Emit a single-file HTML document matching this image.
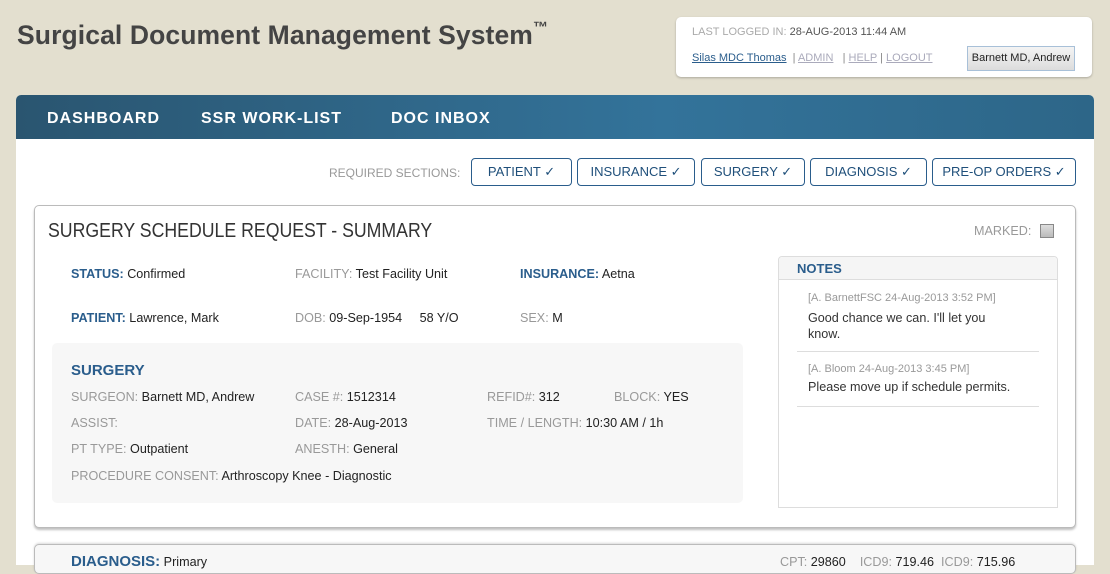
<!DOCTYPE html>
<html><head><meta charset="utf-8"><style>
*{margin:0;padding:0;box-sizing:border-box}
body{width:1110px;height:560px;overflow:hidden;background:#e3dfcf;font-family:"Liberation Sans",sans-serif;font-size:12.6px;color:#222;position:relative}
.a{position:absolute;white-space:nowrap}
.g{color:#999}
.b{color:#2a5d8c;font-weight:bold}
.btn{position:absolute;top:158px;height:28px;border:1px solid #2a5d8c;border-radius:4px;color:#1f4f7a;font-size:13px;line-height:26px;text-align:center;background:#fff}
.nav{position:absolute;top:110px;color:#fff;font-weight:bold;font-size:16px;letter-spacing:1px}
</style></head><body>
<div class="a" style="left:17px;top:20px;font-size:26.5px;font-weight:bold;color:#444;letter-spacing:0.1px">Surgical Document Management System<sup style="font-size:15px;position:relative;top:-2px">™</sup></div>

<div class="a" style="left:676px;top:17px;width:416px;height:60px;background:#fff;border-radius:5px;box-shadow:0 1px 2px rgba(0,0,0,.25)"></div>
<div class="a" style="left:692px;top:26px;font-size:11px;color:#aaa">LAST LOGGED IN: <span style="color:#555">28-AUG-2013 11:44 AM</span></div>
<div class="a" style="left:692px;top:52px;font-size:11px;color:#888"><u style="color:#2a5d8c">Silas MDC Thomas</u> &nbsp;| <u style="color:#aab">ADMIN</u> &nbsp; | <u style="color:#aab">HELP</u> | <u style="color:#aab">LOGOUT</u></div>
<div class="a" style="left:967px;top:46px;width:108px;height:25px;border:1px solid #a8c0d8;background:linear-gradient(#f4f4f4,#dcdcdc);font-size:11px;line-height:23px;text-align:center;color:#222">Barnett MD, Andrew</div>

<div class="a" style="left:16px;top:95px;width:1078px;height:470px;background:#fff;border-radius:5px 5px 0 0"></div>
<div class="a" style="left:16px;top:95px;width:1078px;height:44px;background:linear-gradient(90deg,#2a5570,#33739a 60%,#2d6688);border-radius:5px 5px 0 0"></div>
<div class="nav" style="left:47px">DASHBOARD</div>
<div class="nav" style="left:201px">SSR WORK-LIST</div>
<div class="nav" style="left:391px">DOC INBOX</div>

<div class="a g" style="left:329px;top:166px;font-size:12px">REQUIRED SECTIONS:</div>
<div class="btn" style="left:471px;width:101px">PATIENT ✓</div>
<div class="btn" style="left:577px;width:118px">INSURANCE ✓</div>
<div class="btn" style="left:701px;width:104px">SURGERY ✓</div>
<div class="btn" style="left:810px;width:117px">DIAGNOSIS ✓</div>
<div class="btn" style="left:932px;width:144px">PRE-OP ORDERS ✓</div>

<div class="a" style="left:34px;top:205px;width:1042px;height:323px;border:1px solid #bbb;border-radius:5px;box-shadow:0 2px 2px rgba(0,0,0,.25);background:#fff"></div>
<div class="a" style="left:48px;top:220px;font-size:20px;color:#333;transform:scaleX(0.885);transform-origin:left">SURGERY SCHEDULE REQUEST - SUMMARY</div>
<div class="a g" style="left:974px;top:224px">MARKED:</div>
<div class="a" style="left:1040px;top:224px;width:14px;height:14px;border:1px solid #888;background:linear-gradient(#ddd,#bbb)"></div>

<div class="a" style="left:71px;top:267px"><span class="b">STATUS:</span> Confirmed</div>
<div class="a" style="left:295px;top:267px"><span class="g">FACILITY:</span> Test Facility Unit</div>
<div class="a" style="left:520px;top:267px"><span class="b">INSURANCE:</span> Aetna</div>
<div class="a" style="left:71px;top:311px"><span class="b">PATIENT:</span> Lawrence, Mark</div>
<div class="a" style="left:295px;top:311px"><span class="g">DOB:</span> 09-Sep-1954 &nbsp; &nbsp; 58 Y/O</div>
<div class="a" style="left:520px;top:311px"><span class="g">SEX:</span> M</div>

<div class="a" style="left:52px;top:343px;width:691px;height:160px;background:#f7f7f7;border-radius:5px"></div>
<div class="a b" style="left:71px;top:362px;font-size:15px">SURGERY</div>
<div class="a" style="left:71px;top:390px"><span class="g">SURGEON:</span> Barnett MD, Andrew</div>
<div class="a" style="left:295px;top:390px"><span class="g">CASE #:</span> 1512314</div>
<div class="a" style="left:487px;top:390px"><span class="g">REFID#:</span> 312</div>
<div class="a" style="left:614px;top:390px"><span class="g">BLOCK:</span> YES</div>
<div class="a g" style="left:71px;top:416px">ASSIST:</div>
<div class="a" style="left:295px;top:416px"><span class="g">DATE:</span> 28-Aug-2013</div>
<div class="a" style="left:487px;top:416px"><span class="g">TIME / LENGTH:</span> 10:30 AM / 1h</div>
<div class="a" style="left:71px;top:442px"><span class="g">PT TYPE:</span> Outpatient</div>
<div class="a" style="left:295px;top:442px"><span class="g">ANESTH:</span> General</div>
<div class="a" style="left:71px;top:469px"><span class="g">PROCEDURE CONSENT:</span> Arthroscopy Knee - Diagnostic</div>

<div class="a" style="left:778px;top:256px;width:280px;height:252px;border:1px solid #ddd;border-radius:4px 4px 0 0;background:#fff"></div>
<div class="a" style="left:779px;top:257px;width:278px;height:23px;background:#f5f5f5;border-bottom:1px solid #ddd;border-radius:4px 4px 0 0"></div>
<div class="a b" style="left:797px;top:261px;font-size:13px">NOTES</div>
<div class="a" style="left:808px;top:292px;font-size:11px;color:#999">[A. BarnettFSC 24-Aug-2013 3:52 PM]</div>
<div class="a" style="left:808px;top:310px;color:#333;line-height:16px">Good chance we can. I'll let you<br>know.</div>
<div class="a" style="left:797px;top:351px;width:242px;height:1px;background:#ddd"></div>
<div class="a" style="left:808px;top:363px;font-size:11px;color:#999">[A. Bloom 24-Aug-2013 3:45 PM]</div>
<div class="a" style="left:808px;top:380px;color:#333">Please move up if schedule permits.</div>
<div class="a" style="left:797px;top:406px;width:242px;height:1px;background:#ddd"></div>

<div class="a" style="left:34px;top:544px;width:1042px;height:30px;border:1px solid #bbb;border-radius:5px;background:#f7f7f7;box-shadow:0 -1px 2px rgba(0,0,0,.15)"></div>
<div class="a" style="left:71px;top:553px"><span class="b" style="font-size:15px">DIAGNOSIS:</span> Primary</div>
<div class="a" style="left:780px;top:555px"><span class="g">CPT:</span> 29860 &nbsp; &nbsp;<span class="g">ICD9:</span> 719.46 &nbsp;<span class="g">ICD9:</span> 715.96</div>
</body></html>
